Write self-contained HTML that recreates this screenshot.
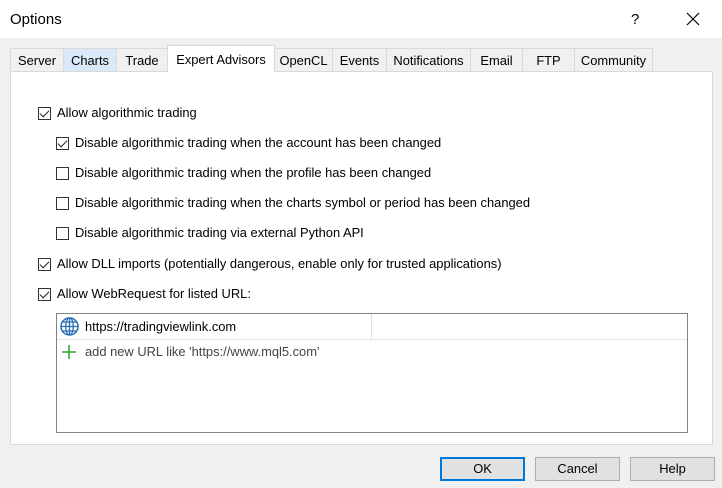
<html><head><style>
body{margin:0;width:722px;height:488px;background:#f0f0f0;font-family:"Liberation Sans",sans-serif;font-size:12.9px;color:#000;position:relative;overflow:hidden}
.a{position:absolute}
.title{left:0;top:0;width:722px;height:38px;background:#fff}
.tab{position:absolute;top:48px;height:23px;border:1px solid #d9d9d9;border-bottom:none;background:#f0f0f0;box-sizing:border-box;text-align:center;line-height:23px}
.cb{position:absolute;width:13px;height:13px;border:1px solid #333;background:#fff;box-sizing:border-box}
.cb.on::after{content:"";position:absolute;left:3px;top:0px;width:4px;height:8px;border:solid #222;border-width:0 1.5px 1.5px 0;transform:rotate(45deg)}
.lbl{position:absolute;line-height:16px}
.btn{position:absolute;top:457px;width:85px;height:24px;border:1px solid #adadad;background:#e1e1e1;box-sizing:border-box;text-align:center;line-height:22px}
</style></head><body>
<div class="a title"></div>
<div class="a" style="left:10px;top:11px;font-size:15px">Options</div>
<div class="a" style="left:631px;top:11px;font-size:15px">?</div>
<svg class="a" style="left:686px;top:12px" width="14" height="14"><path d="M1 1L13 13M13 1L1 13" stroke="#000" stroke-width="1.2"/></svg>
<div class="a" style="left:10px;top:71px;width:703px;height:374px;background:#fff;border:1px solid #d9d9d9;box-sizing:border-box"></div>
<div class="tab" style="left:10px;width:54px">Server</div>
<div class="tab" style="left:63px;width:54px;background:#d9e9f8">Charts</div>
<div class="tab" style="left:116px;width:52px">Trade</div>
<div class="tab" style="left:167px;width:108px;top:45px;height:27px;background:#fff;line-height:27px;border-color:#d9d9d9">Expert Advisors</div>
<div class="tab" style="left:274px;width:59px">OpenCL</div>
<div class="tab" style="left:332px;width:55px">Events</div>
<div class="tab" style="left:386px;width:85px">Notifications</div>
<div class="tab" style="left:470px;width:53px">Email</div>
<div class="tab" style="left:522px;width:53px">FTP</div>
<div class="tab" style="left:574px;width:79px">Community</div>

<div class="cb on" style="left:38px;top:107px"></div><div class="lbl" style="left:57px;top:105px">Allow algorithmic trading</div>
<div class="cb on" style="left:56px;top:137px"></div><div class="lbl" style="left:75px;top:135px">Disable algorithmic trading when the account has been changed</div>
<div class="cb" style="left:56px;top:167px"></div><div class="lbl" style="left:75px;top:165px">Disable algorithmic trading when the profile has been changed</div>
<div class="cb" style="left:56px;top:197px"></div><div class="lbl" style="left:75px;top:195px">Disable algorithmic trading when the charts symbol or period has been changed</div>
<div class="cb" style="left:56px;top:227px"></div><div class="lbl" style="left:75px;top:225px">Disable algorithmic trading via external Python API</div>
<div class="cb on" style="left:38px;top:258px"></div><div class="lbl" style="left:57px;top:256px">Allow DLL imports (potentially dangerous, enable only for trusted applications)</div>
<div class="cb on" style="left:38px;top:288px"></div><div class="lbl" style="left:57px;top:286px">Allow WebRequest for listed URL:</div>

<div class="a" style="left:56px;top:313px;width:632px;height:120px;border:1px solid #828282;box-sizing:border-box;background:#fff"></div>
<div class="a" style="left:57px;top:339px;width:630px;height:1px;background:#e5e5e5"></div>
<div class="a" style="left:371px;top:314px;width:1px;height:25px;background:#e0e0e0"></div>
<svg class="a" style="left:60px;top:317px" width="19" height="19" viewBox="0 0 19 19"><circle cx="9.5" cy="9.5" r="8.5" fill="#fff" stroke="#2a6db5" stroke-width="1.5"/><ellipse cx="9.5" cy="9.5" rx="3.8" ry="8.5" fill="none" stroke="#2a6db5" stroke-width="1.3"/><path d="M1 9.5H18M2.5 5H16.5M2.5 14H16.5M9.5 1V18" stroke="#2a6db5" stroke-width="1.3"/></svg>
<div class="lbl" style="left:85px;top:319px">https://tradingviewlink.com</div>
<svg class="a" style="left:62px;top:345px" width="14" height="14"><path d="M7 0V14M0 7H14" stroke="#2ca02c" stroke-width="1.5"/></svg>
<div class="lbl" style="left:85px;top:344px;color:#444">add new URL like 'https://www.mql5.com'</div>

<div class="btn" style="left:440px;border:2px solid #0078d7;line-height:20px">OK</div>
<div class="btn" style="left:535px">Cancel</div>
<div class="btn" style="left:630px">Help</div>
</body></html>
